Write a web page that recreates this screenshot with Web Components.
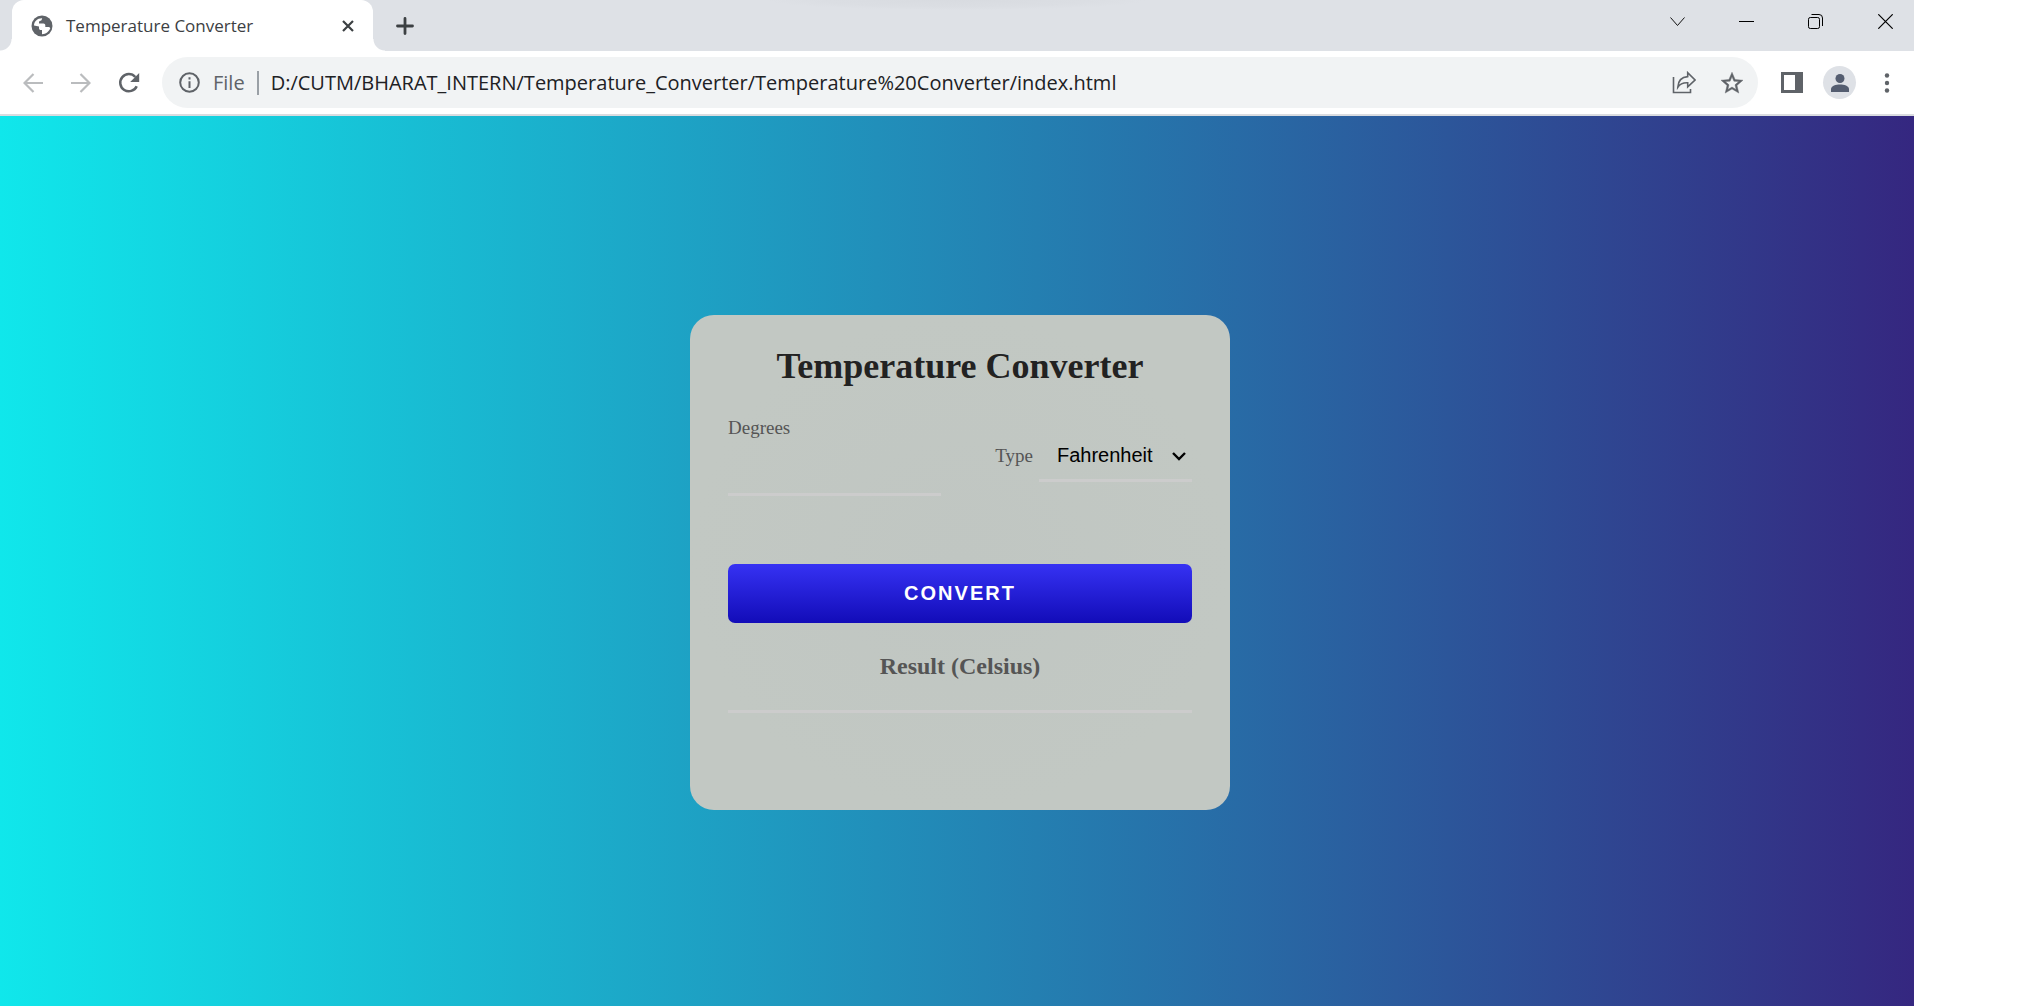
<!DOCTYPE html>
<html lang="en">
<head>
<meta charset="utf-8">
<title>Temperature Converter</title>
<style>
  html { height: 100%; background: #fff; }
  body { margin: 0; min-height: 100%; display: flex; }
  browser-window { flex: 1; margin-right: 111px; }
</style>
</head>
<body>
<browser-window>
  <tab-strip slot="tabs"><browser-tab>Temperature Converter</browser-tab></tab-strip>
  <tool-bar slot="toolbar" scheme="File" address="D:/CUTM/BHARAT_INTERN/Temperature_Converter/Temperature%20Converter/index.html"></tool-bar>
  <temperature-converter heading="Temperature Converter"></temperature-converter>
</browser-window>

<script>
const define = (name, html, setup) => {
  const template = document.createElement('template');
  template.innerHTML = html;
  customElements.define(name, class extends HTMLElement {
    constructor() {
      super();
      this.attachShadow({ mode: 'open' }).append(template.content.cloneNode(true));
    }
    connectedCallback() { if (setup) setup(this, this.shadowRoot); }
  });
};

const reset = `
  :host, *, *::before, *::after { box-sizing: border-box; }
  button { border: 0; padding: 0; margin: 0; background: none; color: inherit; font: inherit; cursor: pointer;
    display: flex; align-items: center; justify-content: center; flex: none; }
  svg { display: block; }`;

define('browser-window', `
<style>
  :host { display: flex; flex-direction: column; min-width: 0; }
  slot { display: contents; }
</style>
<slot name="tabs"></slot><slot name="toolbar"></slot><slot></slot>`);

define('browser-tab', `
<style>${reset}
  :host { display: flex; align-items: center; width: 361px; height: 51px; padding: 0 12px 0 18px; gap: 12px;
    background: #fff; border-radius: 12px 12px 0 0; color: #3c4043; font: 17px/24px "Open Sans", "Noto Sans", sans-serif;
    position: relative; }
  :host::before, :host::after { content: ""; position: absolute; bottom: 0; width: 12px; height: 12px; }
  :host::before { right: 100%; background: radial-gradient(circle at 0 0, #dee1e6 11px, #fff 12px); }
  :host::after { left: 100%; background: radial-gradient(circle at 100% 0, #dee1e6 11px, #fff 12px); }
  span { flex: 1; white-space: nowrap; }
  button { width: 26px; height: 26px; }
</style>
<svg width="24" height="24" viewBox="0 0 24 24"><circle cx="12" cy="12" r="10.500" fill="#5f6368"/><path fill="#fff" d="M4 11.500C4 7.500 7.500 4 12.200 4.200L11.500 6.300 9 7.500v2h4.500c1 0 1.800.8 1.800 1.800V13h3c.9 0 1.600.6 2 1.200C18.900 17.500 16 20 12 20.200V16h-1.200c-1 0-1.800-.8-1.800-1.800V12.500z"/></svg>
<span><slot></slot></span>
<button aria-label="Close tab"><svg width="12" height="12" viewBox="0 0 12 12" stroke="#3c4043" stroke-width="2.200"><path d="M1 1l10 10M11 1L1 11"/></svg></button>`);

define('tab-strip', `
<style>${reset}
  :host { display: flex; align-items: center; height: 51px; flex: none; padding: 0 6px 0 12px;
    background: radial-gradient(ellipse 190px 10px at 50% 0, #d8dbe0, #dbdee3 70%, #dee1e6) , #dee1e6; color: #000; }
  .new { width: 32px; height: 32px; margin-left: 16px; }
  .controls { display: flex; margin-left: auto; margin-bottom: 8px; }
  .controls button { width: 69px; height: 42px; }
  .controls button:last-child { width: 46px; margin-left: 12px; }
</style>
<slot></slot>
<button class="new" aria-label="New tab"><svg width="18" height="18" viewBox="0 0 18 18" stroke="#3c4043" stroke-width="2.800" stroke-linecap="round"><path d="M9 1.500v15M1.500 9h15"/></svg></button>
<div class="controls">
  <button aria-label="Search tabs"><svg width="15" height="10" viewBox="0 0 15 10" fill="none" stroke="#111"><path d="M.5.5l7 8 7-8"/></svg></button>
  <button aria-label="Minimize"><svg width="15" height="15" viewBox="0 0 15 15"><path d="M0 7h15v1H0z"/></svg></button>
  <button aria-label="Restore"><svg width="15" height="15" viewBox="0 0 15 15" fill="none" stroke="#000"><rect x=".5" y="3.500" width="11" height="11" rx="1.800"/><path d="M3.500.5h7.500q3.500 0 3.500 3.500v8"/></svg></button>
  <button aria-label="Close"><svg width="15" height="15" viewBox="0 0 15 15" stroke="#000" stroke-width="1.200"><path d="M.3.3l14.400 14.400M14.700.3L.3 14.700"/></svg></button>
</div>`);

define('tool-bar', `
<style>${reset}
  :host { display: flex; align-items: center; height: 65px; flex: none; padding: 0 9px 0 9px; background: #fff;
    border-bottom: 2px solid #dadce0; color: #5f6368; font: 20px/28px "Open Sans", "Noto Sans", sans-serif; }
  button { width: 48px; height: 48px; }
  form { display: flex; align-items: center; flex: 1; min-width: 0; height: 51px; margin: 0 12px 0 9px; padding: 0 2px 0 3px;
    background: #f1f3f4; border-radius: 26px; }
  label { padding-right: 12px; }
  i { width: 2px; height: 24px; background: #9aa0a6; margin-right: 12px; }
  input { flex: 1; min-width: 0; height: 36px; border: 0; padding: 0; background: none; outline: 0; color: #202124; font: inherit; }
  .avatar { width: 33px; height: 33px; margin: 0 13px 0 9px; border-radius: 50%; background: #dee1e6; }
</style>
<button aria-label="Back"><svg width="20" height="20" viewBox="0 0 20 20" fill="none" stroke="#babcbe" stroke-width="2.200"><path d="M20 10H1.800M10.500 1L1.500 10l9 9"/></svg></button>
<button aria-label="Forward"><svg width="20" height="20" viewBox="0 0 20 20" fill="none" stroke="#babcbe" stroke-width="2.200"><path d="M0 10h18.200M9.500 1l9 9-9 9"/></svg></button>
<button aria-label="Reload"><svg width="22" height="22" viewBox="0 0 22 22" fill="none" stroke="#5f6368" stroke-width="2.500"><path d="M18.700 14.200A8.600 8.600 0 1 1 17.300 5"/><path d="M21.200 1v9h-9z" fill="#5f6368" stroke="none"/></svg></button>
<form onsubmit="return false">
  <button type="button" aria-label="View site information"><svg width="21" height="21" viewBox="0 0 21 21" fill="#5f6368"><circle cx="10.500" cy="10.500" r="9.300" fill="none" stroke="#5f6368" stroke-width="2"/><path d="M9.500 9.200h2V16h-2zM9.500 5.300h2v2.200h-2z"/></svg></button>
  <label for="url"></label><i></i>
  <input id="url" type="text" spellcheck="false">
  <button type="button" aria-label="Share"><svg width="24" height="24" viewBox="0 0 24 24" fill="none" stroke="#5f6368" stroke-width="1.600"><path d="M1.500 6v15.500h17V18"/><path d="M5.800 16.200C6.200 9.700 9.500 6 15.700 5.600V1.700L23 9l-7.300 6.800v-4c-4.500-.2-7.700 1-9.900 4.400z"/></svg></button>
  <button type="button" aria-label="Bookmark"><svg width="24" height="24" viewBox="0 0 24 24" fill="#5f6368" stroke="#5f6368" stroke-width=".4"><path fill-rule="evenodd" d="M23 9.200l-7.900-.7L12 1.200 8.900 8.500 1 9.200l6 5.200-1.800 7.700L12 18l6.800 4.100L17 14.400zM12 16l-4.100 2.500L9 13.800l-3.700-3.200 4.800-.4L12 5.800l1.900 4.400 4.800.4-3.700 3.200 1.100 4.700z"/></svg></button>
</form>
<button style="width:44px" aria-label="Side panel"><svg width="22" height="21" viewBox="0 0 22 21"><path fill="#5f6368" fill-rule="evenodd" d="M0 0h22v21H0zM3 3v15h11V3z"/></svg></button>
<button class="avatar" aria-label="Profile"><svg width="18" height="18" viewBox="0 0 18 18" fill="#545d70"><circle cx="9" cy="4.500" r="4.500"/><path d="M0 18v-3c0-3.200 5-4.500 9-4.500s9 1.300 9 4.500v3z"/></svg></button>
<button style="width:36px" aria-label="Menu"><svg width="6" height="20" viewBox="0 0 6 20" fill="#5f6368"><circle cx="3" cy="2.500" r="2.200"/><circle cx="3" cy="10" r="2.200"/><circle cx="3" cy="17.500" r="2.200"/></svg></button>`,
(host, root) => {
  root.querySelector('label').textContent = host.getAttribute('scheme');
  root.querySelector('input').value = host.getAttribute('address');
});

define('temperature-converter', `
<style>${reset}
  :host { display: flex; flex: 1; align-items: center; justify-content: center; padding: 3px 0 0 6px;
    background: linear-gradient(to right, #10e7eb, #352780); font-family: "Liberation Serif", serif; color: #555; }
  form { width: 540px; padding: 30px 38px 97px; border-radius: 24px; display: flex; flex-direction: column;
    background: radial-gradient(ellipse closest-side, #c0c6c2, #c2c8c3); }
  h1 { margin: 0 0 30px; font-size: 36px; line-height: 42px; text-align: center; color: #222; }
  .fields { display: flex; align-items: center; justify-content: space-between; margin-bottom: 68px; }
  .degrees { display: flex; flex-direction: column; width: 213px; }
  .type { display: flex; align-items: baseline; gap: 6px; }
  label { font-size: 19px; line-height: 22px; }
  input, select { border: 0; border-bottom: 3px solid #ccc; background: none; outline: 0; border-radius: 0;
    margin: 0; font: 20px "Liberation Sans", sans-serif; color: #000; width: 100%; }
  .degrees input { height: 57px; padding: 0 18px; }
  .select { display: grid; align-items: center; width: 153px; }
  .select > * { grid-area: 1 / 1; }
  select { appearance: none; height: 51px; padding: 0 18px; }
  .select svg { justify-self: end; margin-right: 6px; pointer-events: none; }
  .convert { height: 59px; margin-bottom: 29px; border-radius: 7px; color: #fff; background: linear-gradient(#3632f3, #120cb8);
    font: bold 20px "Liberation Sans", sans-serif; letter-spacing: 2px; }
  .result { text-align: center; font-size: 24px; line-height: 28px; font-weight: bold; }
  .result + input { height: 33px; text-align: center; }
</style>
<form>
  <h1></h1>
  <div class="fields">
    <div class="degrees"><label for="degrees">Degrees</label><input id="degrees" type="text" inputmode="decimal"></div>
    <div class="type"><label for="type">Type</label>
      <span class="select"><select id="type"><option>Fahrenheit</option><option>Kelvin</option></select>
      <svg width="14" height="9" viewBox="0 0 14 9" fill="none" stroke="#000" stroke-width="2.400"><path d="M1 1l6 6 6-6"/></svg></span></div>
  </div>
  <button class="convert">CONVERT</button>
  <label class="result" for="result">Result (Celsius)</label>
  <input id="result" type="text" readonly>
</form>`,
(host, root) => {
  root.querySelector('h1').textContent = host.getAttribute('heading');
  root.querySelector('form').addEventListener('submit', event => {
    event.preventDefault();
    const value = parseFloat(root.getElementById('degrees').value);
    if (Number.isNaN(value)) return;
    const kelvin = root.getElementById('type').value === 'Kelvin';
    root.getElementById('result').value = (kelvin ? value - 273.15 : (value - 32) * 5 / 9).toFixed(2);
  });
});
</script>
</body>
</html>
